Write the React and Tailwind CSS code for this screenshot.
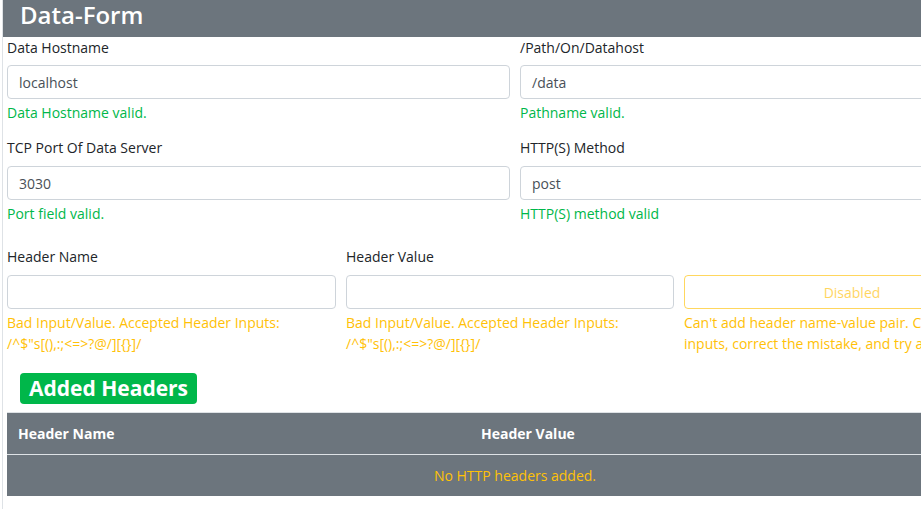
const font = { fontFamily: '"Open Sans", "Noto Sans", sans-serif' };

function Field({ label, value, note, gap = "mb-[8px]" }) {
  return (
    <div>
      <label className={`block text-[14px] leading-[21px] text-[#212529] ${gap}`}>
        {label}
      </label>
      <div className="h-[34px] border border-[#ced4da] rounded-[4px] px-[11px] flex items-center text-[14px] text-[#495057]">
        {value}
      </div>
      <div className="mt-[3px] text-[14px] leading-[21px] text-[#00b74a]">
        {note}
      </div>
    </div>
  );
}

function HeaderInput({ label }) {
  return (
    <div>
      <label className="block text-[14px] leading-[21px] text-[#212529] mb-[8px]">
        {label}
      </label>
      <div className="h-[34px] border border-[#ced4da] rounded-[4px]" />
      <div className="mt-[3px] text-[14px] leading-[21px] text-[#ffc107] whitespace-nowrap">
        Bad Input/Value. Accepted Header Inputs:
        <br />
        {'/^$"s[(),:;<=>?@/][{}]/'}
      </div>
    </div>
  );
}

export default function App() {
  return (
    <div className="w-[921px] h-[509px] overflow-hidden bg-white" style={font}>
      <div className="w-[1030px] h-[509px] ml-[2px] border-l border-[#dee2e6]">
        <div className="h-[37px] bg-[#6c757d] pl-[17px]">
          <h1 className="text-[24px] leading-[30px] font-semibold text-white">Data-Form</h1>
        </div>

        <div className="pl-[4px] w-[1021px]">
          <div className="grid grid-cols-[503px_503px] gap-x-[10px]">
            <Field label="Data Hostname" value="localhost" note="Data Hostname valid." gap="mb-[7px]" />
            <Field label="/Path/On/Datahost" value="/data" note="Pathname valid." gap="mb-[7px]" />
          </div>

          <div className="grid grid-cols-[503px_503px] gap-x-[10px] mt-[14px]">
            <Field label="TCP Port Of Data Server" value="3030" note="Port field valid." />
            <Field label="HTTP(S) Method" value="post" note="HTTP(S) method valid" />
          </div>

          <div className="grid grid-cols-[329px_328px_336px] gap-x-[10px] mt-[22px]">
            <HeaderInput label="Header Name" />
            <HeaderInput label="Header Value" />
            <div className="pt-[29px]">
              <button
                disabled
                className="w-full h-[34px] border border-[#ffc107] rounded-[4px] text-[14px] text-[#ffc107] opacity-65"
              >
                Disabled
              </button>
              <div className="mt-[3px] text-[14px] leading-[21px] text-[#ffc107] whitespace-nowrap">
                Can't add header name-value pair. Check
                <br />
                inputs, correct the mistake, and try again.
              </div>
            </div>
          </div>

          <div className="mt-[19px] ml-[13px]">
            <span className="inline-block h-[31px] leading-[31px] px-[9px] rounded-[4px] bg-[#00b74a] text-white text-[21px] font-bold">
              Added Headers
            </span>
          </div>

          <table className="mt-[8px] w-[1016px] bg-[#6c757d] text-[14px] leading-[21px] border-collapse">
            <thead>
              <tr className="border-t border-[#dee2e6]">
                <th className="w-[463px] text-left font-bold text-white px-[11px] py-[10px]">Header Name</th>
                <th className="text-left font-bold text-white px-[11px] py-[10px]">Header Value</th>
              </tr>
            </thead>
            <tbody>
              <tr className="border-t border-[#dee2e6]">
                <td colSpan={2} className="text-center text-[#ffc107] py-[10px]">
                  No HTTP headers added.
                </td>
              </tr>
            </tbody>
          </table>
        </div>
      </div>
    </div>
  );
}
